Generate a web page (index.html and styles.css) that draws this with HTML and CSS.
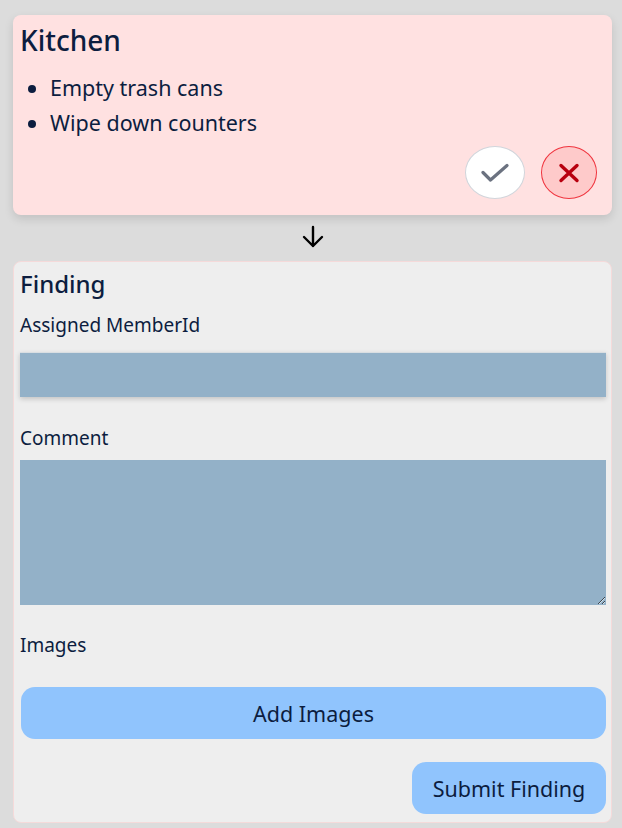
FILE: index.html
```html
<!DOCTYPE html>
<html lang="en">

<head>
    <meta charset="UTF-8">
    <meta name="viewport" content="width=device-width, initial-scale=1.0">
    <title>Kitchen - Finding</title>
    <link rel="stylesheet" href="styles.css">
</head>

<body>
    <section class="task-card">
        <h2 class="task-title">Kitchen</h2>
        <ul class="task-list">
            <li>Empty trash cans</li>
            <li>Wipe down counters</li>
        </ul>
        <div class="task-actions">
            <button class="round-btn btn-ok" aria-label="Approve">
                <svg width="28" height="20" viewBox="0 0 28 20" fill="none" stroke="currentColor" stroke-width="3.2" stroke-linecap="round" stroke-linejoin="round">
                    <path d="M2 9.5L9.5 17L26 2.5"/>
                </svg>
            </button>
            <button class="round-btn btn-reject" aria-label="Reject">
                <svg width="22" height="20" viewBox="0 0 22 20" fill="none" stroke="currentColor" stroke-width="3.4" stroke-linecap="round">
                    <path d="M3 2.5L19 17.5M19 2.5L3 17.5"/>
                </svg>
            </button>
        </div>
    </section>

    <div class="flow-arrow">
        <svg width="24" height="24" viewBox="0 0 24 24" fill="none" stroke="#000" stroke-width="2.4" stroke-linecap="round" stroke-linejoin="round">
            <path d="M12 2v19M3 12l9 9 9-9"/>
        </svg>
    </div>

    <form class="finding-card">
        <h2 class="finding-title">Finding</h2>
        <label class="field-label" for="member">Assigned MemberId</label>
        <input class="field-input" id="member" type="text">
        <label class="field-label" for="comment">Comment</label>
        <textarea class="field-area" id="comment"></textarea>
        <span class="field-label">Images</span>
        <button type="button" class="blue-btn btn-wide">Add Images</button>
        <div class="form-foot">
            <button type="button" class="blue-btn btn-submit">Submit Finding</button>
        </div>
    </form>
</body>

</html>
```

FILE: styles.css
```css
/* global */
body {
    font-family: 'Noto Sans', 'Open Sans', sans-serif;
    color: #0c1d3f;
    background-color: #dcdcdc;
    margin: 0;
    padding: 15px 10px 6px 13px;
}

/* task card */
.task-card {
    background-color: #ffe1e1;
    border-radius: 8px;
    box-shadow: 0 4px 10px rgba(0, 0, 0, 0.12);
    padding: 9px 15px 16px 7px;
    height: 175px;
    display: flex;
    flex-direction: column;
}

.task-title {
    font-size: 28px;
    font-weight: 500;
    line-height: 32px;
    margin: 0;
}

.task-list {
    margin: 14px 0 0;
    padding-left: 30px;
    font-size: 21.5px;
    line-height: 35px;
}

.task-actions {
    display: flex;
    justify-content: flex-end;
    gap: 16px;
    margin-top: auto;
}

.round-btn {
    height: 53px;
    border-radius: 50%;
    display: flex;
    align-items: center;
    justify-content: center;
    padding: 0;
    cursor: pointer;
}

.btn-ok {
    width: 60px;
    background-color: #fff;
    border: 1.5px solid #d1d5db;
    color: #6b7280;
}

.btn-reject {
    width: 56px;
    background-color: #fecaca;
    border: 1.5px solid #f0353f;
    color: #b8000f;
}

.flow-arrow {
    display: flex;
    justify-content: center;
    padding: 10px 0 12px;
    line-height: 0;
}

/* finding form */
.finding-card {
    background-color: #eeeeee;
    border: 1px solid #f5dada;
    border-radius: 8px;
    padding: 6px 5px 8px 6px;
    display: flex;
    flex-direction: column;
}

.finding-title {
    font-size: 24px;
    font-weight: 500;
    line-height: 32px;
    margin: 0 0 13px;
}

.field-label {
    font-size: 19px;
    line-height: 24px;
    margin-bottom: 10px;
}

.field-input,
.field-area {
    background-color: #93b1c8;
    border: none;
    margin: 0 0 28px;
    font: inherit;
    box-sizing: border-box;
}

.field-input {
    height: 45px;
    margin-top: 5px;
    margin-bottom: 29px;
    border-top: 1px solid #d9dee2;
    box-shadow: 0 2px 5px rgba(0, 0, 0, 0.18);
}

.field-area {
    height: 145px;
    resize: vertical;
}

.blue-btn {
    background-color: #90c4fd;
    border: none;
    border-radius: 14px;
    height: 52px;
    font-family: inherit;
    font-size: 21.5px;
    color: #0c1d3f;
    cursor: pointer;
}

.btn-wide {
    margin: 20px 0 0 1px;
}

.form-foot {
    display: flex;
    justify-content: flex-end;
    margin-top: 23px;
}

.btn-submit {
    padding: 0;
    width: 194px;
}
```
